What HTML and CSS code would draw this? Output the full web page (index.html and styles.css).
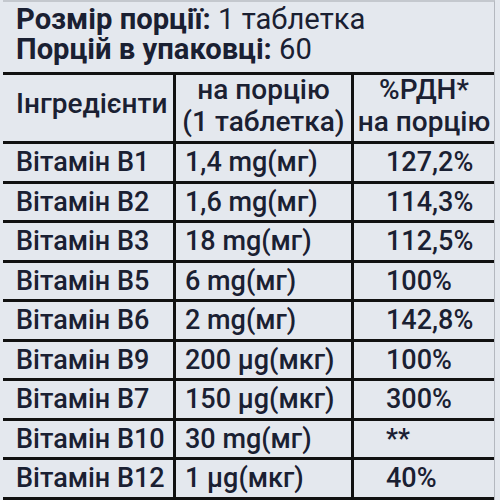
FILE: index.html
```html
<!DOCTYPE html>
<html lang="uk">
<head>
<meta charset="utf-8">
<link rel="stylesheet" href="styles.css">
</head>
<body>
<div class="card">
  <div class="info">
    <div class="line"><b>Розмір порції:</b> 1 таблетка</div>
    <div class="line"><b>Порцій в упаковці:</b> 60</div>
  </div>
  <div class="facts">
    <div class="cell head c1">Інгредієнти</div>
    <div class="cell head c2">на порцію<br>(1 таблетка)</div>
    <div class="cell head c3">%РДН*<br>на порцію</div>

    <div class="cell c1">Вітамін B1</div><div class="cell c2">1,4 mg(мг)</div><div class="cell c3">127,2%</div>
    <div class="cell c1">Вітамін B2</div><div class="cell c2">1,6 mg(мг)</div><div class="cell c3">114,3%</div>
    <div class="cell c1">Вітамін B3</div><div class="cell c2">18 mg(мг)</div><div class="cell c3">112,5%</div>
    <div class="cell c1">Вітамін B5</div><div class="cell c2">6 mg(мг)</div><div class="cell c3">100%</div>
    <div class="cell c1">Вітамін B6</div><div class="cell c2">2 mg(мг)</div><div class="cell c3">142,8%</div>
    <div class="cell c1">Вітамін B9</div><div class="cell c2">200 µg(мкг)</div><div class="cell c3">100%</div>
    <div class="cell c1">Вітамін B7</div><div class="cell c2">150 µg(мкг)</div><div class="cell c3">300%</div>
    <div class="cell c1">Вітамін B10</div><div class="cell c2">30 mg(мг)</div><div class="cell c3">**</div>
    <div class="cell c1">Вітамін B12</div><div class="cell c2">1 µg(мкг)</div><div class="cell c3">40%</div>
  </div>
</div>
</body>
</html>
```
FILE: styles.css
```css
html, body {
  margin: 0;
  padding: 0;
  background: #e4e8ee;
}
body {
  width: 500px;
  height: 500px;
  overflow: hidden;
  font-family: Roboto, "Liberation Sans", sans-serif;
  color: #1a2032;
}
.card {
  margin-left: 3px;
  width: 492px;
  border-top: 2px solid #c4c8ce;
  border-right: 1px solid #b4b8bf;
  box-sizing: border-box;
}
.info {
  height: 70px;
  padding: 2px 0 0 13px;
  box-sizing: border-box;
  font-size: 29.2px;
  font-weight: 400;
}
.line {
  line-height: 30px;
  white-space: nowrap;
}
.line b {
  font-weight: 700;
}
.facts {
  display: grid;
  grid-template-columns: 170px 175px 140px;
  grid-template-rows: 66px;
  grid-auto-rows: 36.5px;
  gap: 3px;
  width: 491px;
  background: #111;
  border-top: 3px solid #111;
  border-bottom: 3px solid #111;
  font-size: 27px;
  font-weight: 500;
}
.cell {
  background: #e4e8ee;
  line-height: 36.5px;
  white-space: nowrap;
}
.head {
  display: flex;
  flex-direction: column;
  justify-content: center;
  font-size: 28px;
  line-height: 32px;
  padding-bottom: 4px;
  text-align: center;
}
.head.c1 {
  line-height: 33px;
  padding-bottom: 9px;
  text-align: left;
}
.c1 {
  padding-left: 13px;
}
.c2 {
  padding-left: 9px;
}
.c3 {
  padding-left: 32px;
}
.head.c2,
.head.c3 {
  padding-left: 0;
}
```
